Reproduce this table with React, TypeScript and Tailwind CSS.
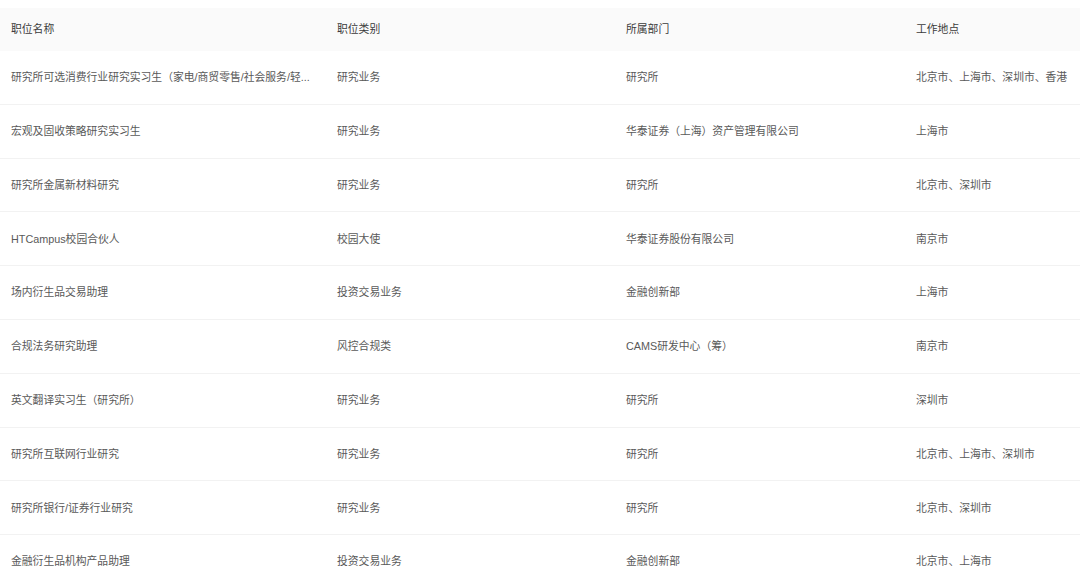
const rows = [
  ['研究所可选消费行业研究实习生（家电/商贸零售/社会服务/轻...', '研究业务', '研究所', '北京市、上海市、深圳市、香港'],
  ['宏观及固收策略研究实习生', '研究业务', '华泰证券（上海）资产管理有限公司', '上海市'],
  ['研究所金属新材料研究', '研究业务', '研究所', '北京市、深圳市'],
  ['HTCampus校园合伙人', '校园大使', '华泰证券股份有限公司', '南京市'],
  ['场内衍生品交易助理', '投资交易业务', '金融创新部', '上海市'],
  ['合规法务研究助理', '风控合规类', 'CAMS研发中心（筹）', '南京市'],
  ['英文翻译实习生（研究所）', '研究业务', '研究所', '深圳市'],
  ['研究所互联网行业研究', '研究业务', '研究所', '北京市、上海市、深圳市'],
  ['研究所银行/证券行业研究', '研究业务', '研究所', '北京市、深圳市'],
  ['金融衍生品机构产品助理', '投资交易业务', '金融创新部', '北京市、上海市'],
];

const font = { fontFamily: '"Liberation Sans", "Noto Sans CJK SC", sans-serif' };
const gridCols = 'grid grid-cols-[326px_289px_290px_175px]';

export default function App() {
  return (
    <div className="w-[1080px] h-[583px] overflow-hidden bg-white pt-2 text-[10.8px]" style={font}>
      <div className={`${gridCols} h-[43px] items-center bg-[#fafafa] text-[#3a3a3a]`}>
        <div className="pl-[11px]">职位名称</div>
        <div className="pl-[11px]">职位类别</div>
        <div className="pl-[11px]">所属部门</div>
        <div className="pl-[11px]">工作地点</div>
      </div>
      {rows.map((r) => (
        <div key={r[0]} className={`${gridCols} h-[53.8px] items-center border-b border-[#f2f2f2] text-[#595959]`}>
          <div className="pl-[11px] whitespace-nowrap">{r[0]}</div>
          <div className="pl-[11px] whitespace-nowrap">{r[1]}</div>
          <div className="pl-[11px] whitespace-nowrap">{r[2]}</div>
          <div className="pl-[11px] whitespace-nowrap">{r[3]}</div>
        </div>
      ))}
    </div>
  );
}
